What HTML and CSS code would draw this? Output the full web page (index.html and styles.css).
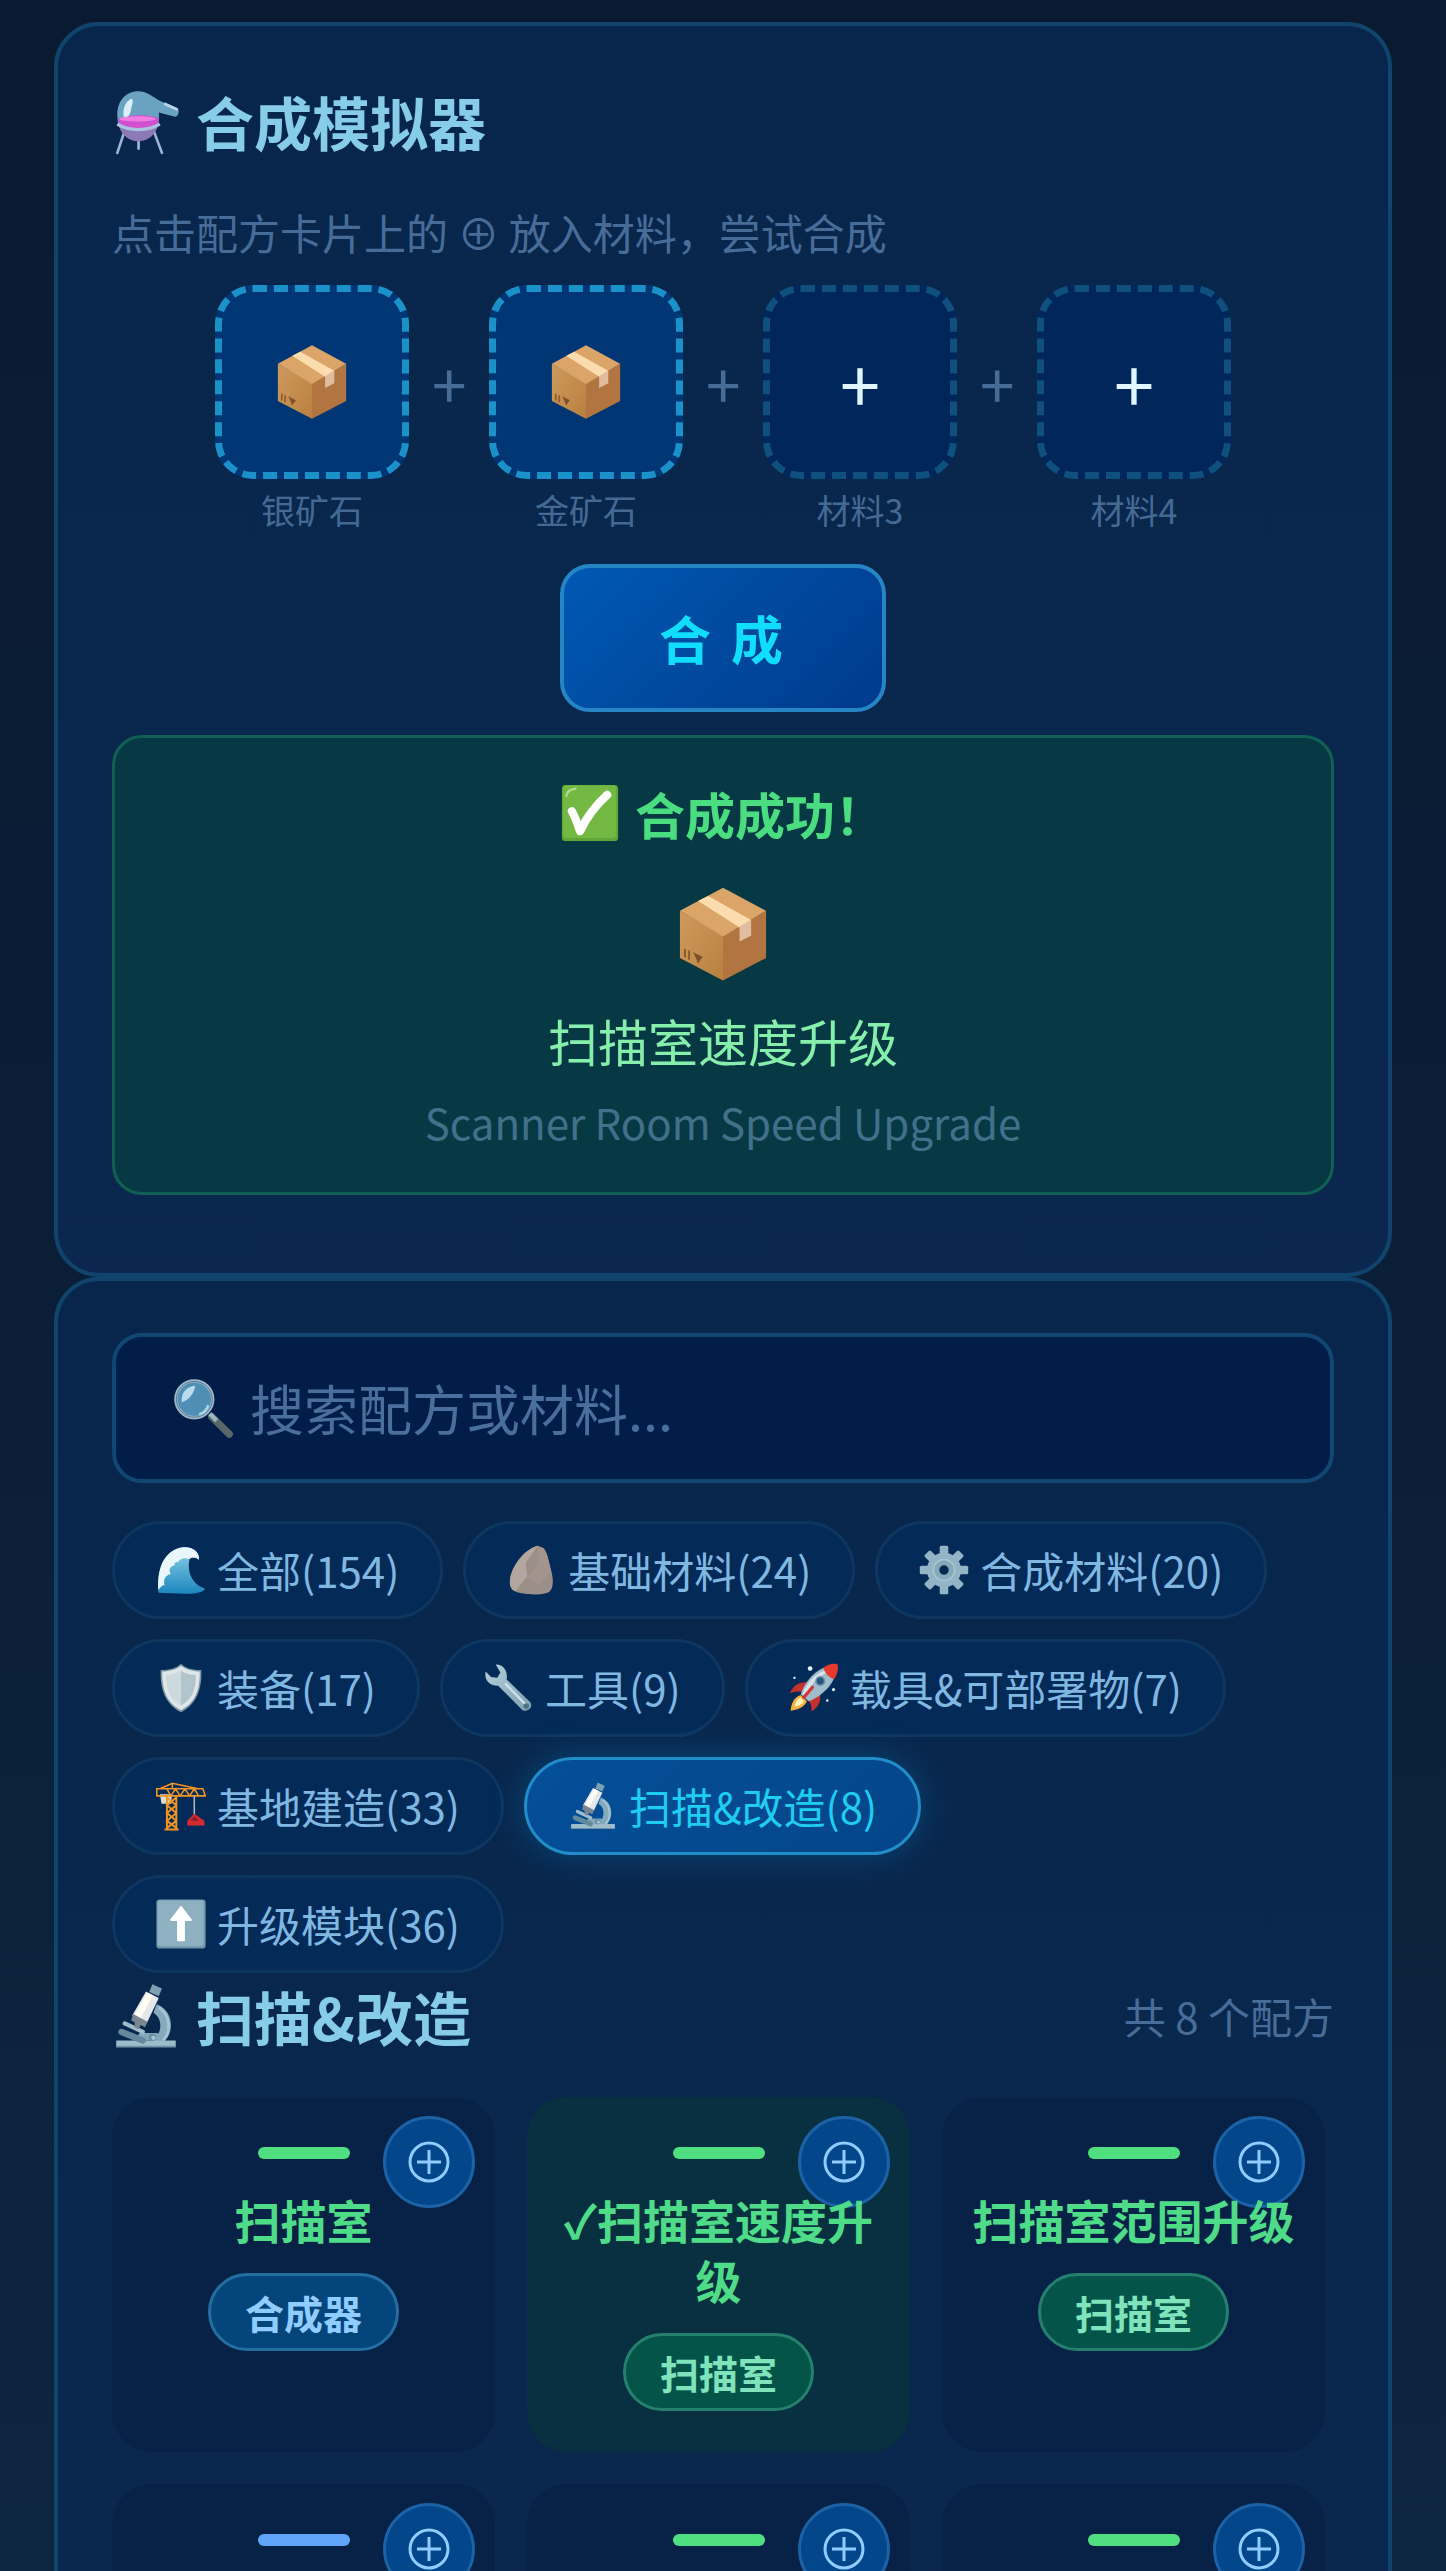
FILE: index.html
```html
<!DOCTYPE html>
<html lang="zh-CN">
<head>
<meta charset="utf-8">
<meta name="viewport" content="width=device-width, initial-scale=1">
<title>合成模拟器</title>
<link rel="stylesheet" href="styles.css">
</head>
<body>
<svg class="sprite" aria-hidden="true">
  <defs>
    <linearGradient id="wood" x1="0" y1="0" x2="1" y2="1"><stop offset="0" stop-color="#cf9a5f"/><stop offset="1" stop-color="#b9803f"/></linearGradient>
    <linearGradient id="steel" x1="0" y1="0" x2="1" y2="1"><stop offset="0" stop-color="#b6d0dc"/><stop offset="1" stop-color="#7b9fb2"/></linearGradient>
    <linearGradient id="sea" x1="0" y1="0" x2="0" y2="1"><stop offset="0" stop-color="#8fd3e8"/><stop offset="1" stop-color="#1c86bd"/></linearGradient>
  </defs>
  <symbol id="i-box" viewBox="0 0 128 128">
    <path d="M12 36 64 66v54L12 93z" fill="url(#wood)"/>
    <path d="M116 36 64 66v54l52-27z" fill="#b27440"/>
    <path d="M12 36 64 8l52 28-52 31z" fill="#dba468"/>
    <path d="M46 18 34 24l50 32 14-9z" fill="#fbdcae"/>
    <path d="M84 55v18l14-7V47z" fill="#e0bda0"/>
    <path d="M18 82v10M23 84v11M30 88l8 4-4 5zM34 94v5" stroke="#7c5228" stroke-width="2" fill="#7c5228"/>
  </symbol>
  <symbol id="i-scope" viewBox="0 0 128 128">
    <path d="M84 42c32 12 34 52 14 70H72c22-10 26-42 6-54z" fill="#86aabd"/>
    <path d="M88 48c22 14 24 46 8 62" stroke="#a5c5d3" stroke-width="5" fill="none"/>
    <path d="M8 110h112v13H8z" fill="#9dbccb"/>
    <path d="M8 120h112v3H8z" fill="#6f93a6"/>
    <path d="M52 96h34l8 14H42z" fill="#84a8ba"/>
    <path d="M18 94l40 16" stroke="#63899d" stroke-width="12" stroke-linecap="round"/>
    <path d="M24 78l34 16" stroke="#9fbdcb" stroke-width="8" stroke-linecap="round"/>
    <path d="M76 4l18 8-6 15-18-8z" fill="#7d9fb2"/>
    <path d="M64 18l24 12-22 46-28-13z" fill="#e4e8ea"/>
    <path d="M67 20l10 5-24 45-12-6z" fill="#fffef4"/>
    <path d="M40 60l27 15-5 10-8-4-4 8-8-4 1-9-7-4z" fill="#7b8790"/>
    <circle cx="76" cy="104" r="7" fill="#6b8fa3"/><circle cx="78" cy="105" r="4" fill="#a7c4d0"/>
  </symbol>
  <symbol id="i-add" viewBox="0 0 44 44">
    <circle cx="22" cy="22" r="19" fill="none" stroke="currentColor" stroke-width="3"/>
    <path d="M22 10v24M10 22h24" stroke="currentColor" stroke-width="3"/>
  </symbol>
</svg>

<main class="page">
  <section class="panel simulator">
    <h1 class="title">
      <svg class="title-icon" viewBox="0 0 128 128" aria-hidden="true">
        <path d="M26 76 10 124M50 82v34M76 76l18 48" stroke="#9fb3d6" stroke-width="5" stroke-linecap="round"/>
        <path d="M50 8c16 0 26 10 40 18l34 16c4 3 0 14-5 14L88 48c4 30-12 52-38 52S10 80 10 52C10 26 26 8 50 8z" fill="#6aa3c1"/>
        <path d="M11 60c20-9 56-9 77-2 0 24-14 44-38 44S13 84 11 60z" fill="#8d79b8"/>
        <path d="M13 60c20-9 54-9 74-1 1 7-1 12-3 15-20 7-48 6-68-1-2-4-3-8-3-13z" fill="#d24fd0"/>
        <ellipse cx="48" cy="60" rx="34" ry="5" fill="#f07ee2"/>
        <path d="M10 70c22 14 58 13 80 0" stroke="#a9c4de" stroke-width="6" fill="none"/>
        <path d="M36 22c-12 6-16 20-14 34 8 2 12-2 14-14 2-10 6-18 0-20z" fill="#d9eef8"/>
        <path d="M100 32l22 10" stroke="#b9d8e8" stroke-width="5" stroke-linecap="round"/>
      </svg>
      <span>合成模拟器</span>
    </h1>
    <p class="hint">点击配方卡片上的 ⊕ 放入材料，尝试合成</p>

    <div class="slots">
      <div class="slot-col">
        <button class="slot filled" type="button" aria-labelledby="s1"><svg class="slot-icon" aria-hidden="true"><use href="#i-box"/></svg></button>
        <span class="slot-label" id="s1">银矿石</span>
      </div>
      <span class="joiner">+</span>
      <div class="slot-col">
        <button class="slot filled" type="button" aria-labelledby="s2"><svg class="slot-icon" aria-hidden="true"><use href="#i-box"/></svg></button>
        <span class="slot-label" id="s2">金矿石</span>
      </div>
      <span class="joiner">+</span>
      <div class="slot-col">
        <button class="slot" type="button" aria-describedby="s3">+</button>
        <span class="slot-label" id="s3">材料3</span>
      </div>
      <span class="joiner">+</span>
      <div class="slot-col">
        <button class="slot" type="button" aria-describedby="s4">+</button>
        <span class="slot-label" id="s4">材料4</span>
      </div>
    </div>

    <button class="craft" type="button">合 成</button>

    <div class="result">
      <p class="result-title">
        <svg class="check-icon" viewBox="0 0 128 128" aria-hidden="true">
          <rect x="2" y="2" width="124" height="124" rx="8" fill="#5fa638"/>
          <rect x="4" y="3" width="118" height="116" rx="8" fill="#72b843"/>
          <path d="M12 26q2-14 20-16" stroke="#b5dc8f" stroke-width="5" fill="none" stroke-linecap="round"/>
          <path d="M24 60q8 14 18 44 22-46 60-80" stroke="#fff" stroke-width="18" fill="none" stroke-linecap="round" stroke-linejoin="round"/>
        </svg>
        <span>合成成功！</span>
      </p>
      <svg class="result-icon" aria-hidden="true"><use href="#i-box"/></svg>
      <p class="result-name">扫描室速度升级</p>
      <p class="result-en">Scanner Room Speed Upgrade</p>
    </div>
  </section>

  <section class="panel recipes">
    <label class="search">
      <svg class="search-icon" viewBox="0 0 128 128" aria-hidden="true">
        <path d="M80 82l36 36" stroke="#59666a" stroke-width="15" stroke-linecap="round"/>
        <path d="M76 76l14 14" stroke="#9eb6c0" stroke-width="9"/>
        <circle cx="44" cy="46" r="38" fill="#4f8fb6" stroke="#9fb9c9" stroke-width="7"/>
        <circle cx="44" cy="46" r="37" fill="none" stroke="#55788f" stroke-width="2"/>
        <path d="M18 52c-2-20 10-32 28-34-2 14-12 30-28 34z" fill="#b7dcee"/>
        <path d="M56 76q12-4 16-16" stroke="#a5dcec" stroke-width="5" fill="none" stroke-linecap="round"/>
      </svg>
      <input class="search-input" type="text" placeholder="搜索配方或材料..." aria-label="搜索配方或材料">
    </label>

    <nav class="chips">
      <button class="chip" type="button">
        <svg class="chip-icon" viewBox="0 0 128 128" aria-hidden="true">
          <path d="M6 122C2 64 20 12 70 6c26-2 42 14 40 32-8-8-18-8-24-2-8 34 8 66 40 76-8 12-30 14-68 12z" fill="url(#sea)"/>
          <path d="M6 116C2 58 22 12 70 6c26-2 42 14 40 32-8-8-20-8-26-2-12-4-22-2-28 8-6-2-10 2-8 8-14 2-16 14-10 22-14 2-20 16-16 28-8 2-12 8-16 14z" fill="#e9f7fb"/>
        </svg><span>全部(154)</span></button>
      <button class="chip" type="button">
        <svg class="chip-icon" viewBox="0 0 128 128" aria-hidden="true">
          <path d="M8 88C12 54 44 12 78 2l16 6c10 14 14 38 20 62 6 22 4 42-6 50-22 10-68 8-90-2C8 112 6 100 8 88z" fill="#9b8f89"/>
          <path d="M78 2 48 46l4 34-30 38C8 112 6 100 8 88 12 54 44 12 78 2z" fill="#b3a69f"/>
          <path d="M78 2l2 48-28 30 30 22 32-32c-6-24-10-48-20-62z" fill="#a3958d"/>
        </svg><span>基础材料(24)</span></button>
      <button class="chip" type="button">
        <svg class="chip-icon" viewBox="0 0 128 128" aria-hidden="true">
          <g fill="#92b4c4"><rect x="53" y="2" width="22" height="124" rx="4"/><rect x="53" y="2" width="22" height="124" rx="4" transform="rotate(45 64 64)"/><rect x="53" y="2" width="22" height="124" rx="4" transform="rotate(90 64 64)"/><rect x="53" y="2" width="22" height="124" rx="4" transform="rotate(135 64 64)"/></g>
          <circle cx="64" cy="64" r="44" fill="#92b4c4"/>
          <circle cx="64" cy="64" r="27" fill="#86a9ba" stroke="#a9c6d3" stroke-width="4"/>
          <circle cx="64" cy="64" r="12" fill="#05284f"/>
        </svg><span>合成材料(20)</span></button>
      <button class="chip" type="button">
        <svg class="chip-icon" viewBox="0 0 128 128" aria-hidden="true">
          <path d="M64 2c12 12 30 16 52 16 2 50-12 88-52 108C24 106 10 68 12 18 34 18 52 14 64 2z" fill="#7c98a6"/>
          <path d="M64 7c12 10 29 14 48 15 1 46-11 80-48 99C27 102 15 68 16 22 36 21 52 17 64 7z" fill="#dfe6e8"/>
          <path d="M64 19c10 8 22 11 38 12 0 38-9 62-38 78z" fill="#b1c5cd"/>
          <path d="M64 19c-10 8-22 11-38 12 0 38 9 62 38 78z" fill="#ccd9dd"/>
        </svg><span>装备(17)</span></button>
      <button class="chip" type="button">
        <svg class="chip-icon" viewBox="0 0 128 128" aria-hidden="true">
          <path d="M30 4 42 24 34 38 18 36 4 22C0 44 14 58 36 58l62 62c12 8 30-6 20-20L58 42C62 20 48 2 30 4z" fill="url(#steel)"/>
          <path d="M54 52l52 54" stroke="#cfe0e8" stroke-width="6"/>
          <circle cx="108" cy="110" r="7" fill="#4b6f83"/>
        </svg><span>工具(9)</span></button>
      <button class="chip" type="button">
        <svg class="chip-icon" viewBox="0 0 128 128" aria-hidden="true">
          <path d="M52 50C30 46 12 54 2 78c14-6 26-6 38-2zM78 76c6 20-2 36-20 48 0-14-2-22-10-30z" fill="#c3322f"/>
          <path d="M30 82C12 88 6 104 4 122c18-2 34-8 42-24z" fill="#fbb13c"/>
          <path d="M30 88c-10 4-14 14-16 24 12-2 20-6 24-14z" fill="#fff4c0"/>
          <path d="M98 10C70 14 40 48 30 80l20 18c32-12 64-42 68-70z" fill="#9fbccb"/>
          <path d="M90 20C66 28 44 54 34 80l8 6c10-28 30-50 56-62z" fill="#d5e4eb"/>
          <path d="M88 12C98 4 114 0 124 3c4 12-2 28-8 38-14-4-24-14-28-29z" fill="#e8382f"/>
          <circle cx="80" cy="46" r="11" fill="#24577c" stroke="#6f93a5" stroke-width="4"/>
          <path d="M60 62 38 88" stroke="#d63430" stroke-width="8" stroke-linecap="round"/>
          <g fill="#eaf7ff"><circle cx="54" cy="14" r="6"/><circle cx="14" cy="38" r="3"/><circle cx="114" cy="68" r="4"/><circle cx="98" cy="96" r="3"/></g>
        </svg><span>载具&amp;可部署物(7)</span></button>
      <button class="chip" type="button">
        <svg class="chip-icon" viewBox="0 0 128 128" aria-hidden="true">
          <path d="M10 34h30v24H14z" fill="#d9dcd6"/>
          <path d="M2 20h118l6 18H2zM10 20 42 6l66 14M42 6v14M28 20l10 18 12-18 12 18 12-18 12 18 12-18 10 16" fill="none" stroke="#f29422" stroke-width="4"/>
          <path d="M28 38v84M52 38v84M28 42l24 20-24 20 24 20-24 18M52 42 28 62l24 20-24 20 24 18M22 124h36" fill="none" stroke="#f29422" stroke-width="5"/>
          <path d="M98 38v50" stroke="#aeb7bd" stroke-width="4"/>
          <path d="M98 84 80 102v12h44v-12z" fill="#d52b30"/><path d="M98 90 88 102h22z" fill="#8d1d2b"/>
        </svg><span>基地建造(33)</span></button>
      <button class="chip active" type="button" aria-pressed="true">
        <svg class="chip-icon" aria-hidden="true"><use href="#i-scope"/></svg><span>扫描&amp;改造(8)</span></button>
      <button class="chip" type="button">
        <svg class="chip-icon" viewBox="0 0 128 128" aria-hidden="true">
          <rect x="1" y="1" width="126" height="126" rx="8" fill="#6f95a8"/>
          <rect x="4" y="3" width="118" height="118" rx="7" fill="#8fb0c0"/>
          <path d="M64 20 90 54H72v52H56V54H38z" fill="#fff" stroke="#fff" stroke-width="4" stroke-linejoin="round"/>
        </svg><span>升级模块(36)</span></button>
    </nav>

    <header class="list-head">
      <h2 class="title"><svg class="title-icon" aria-hidden="true"><use href="#i-scope"/></svg><span>扫描&amp;改造</span></h2>
      <span class="count">共 8 个配方</span>
    </header>

    <div class="grid">
      <article class="card">
        <button class="add" type="button" aria-label="放入"><svg class="add-icon" aria-hidden="true"><use href="#i-add"/></svg></button>
        <span class="bar"></span>
        <h3 class="name">扫描室</h3>
        <span class="badge">合成器</span>
      </article>
      <article class="card done">
        <button class="add" type="button" aria-label="放入"><svg class="add-icon" aria-hidden="true"><use href="#i-add"/></svg></button>
        <span class="bar"></span>
        <h3 class="name">✓扫描室速度升级</h3>
        <span class="badge green">扫描室</span>
      </article>
      <article class="card">
        <button class="add" type="button" aria-label="放入"><svg class="add-icon" aria-hidden="true"><use href="#i-add"/></svg></button>
        <span class="bar"></span>
        <h3 class="name">扫描室范围升级</h3>
        <span class="badge green">扫描室</span>
      </article>
      <article class="card">
        <button class="add" type="button" aria-label="放入"><svg class="add-icon" aria-hidden="true"><use href="#i-add"/></svg></button>
        <span class="bar blue"></span>
      </article>
      <article class="card">
        <button class="add" type="button" aria-label="放入"><svg class="add-icon" aria-hidden="true"><use href="#i-add"/></svg></button>
        <span class="bar"></span>
      </article>
      <article class="card">
        <button class="add" type="button" aria-label="放入"><svg class="add-icon" aria-hidden="true"><use href="#i-add"/></svg></button>
        <span class="bar"></span>
      </article>
    </div>
  </section>
</main>
</body>
</html>
```
FILE: styles.css
```css
* { box-sizing: border-box; }

body {
  margin: 0;
  background: #0b1c33;
  color: #e0f7ff;
  font-family: "Noto Sans CJK SC", "Noto Sans", sans-serif;
  font-size: 42px;
  line-height: 68px;
}

h1, h2, h3, p { margin: 0; }

button, input { font: inherit; color: inherit; }

button { padding: 0; cursor: pointer; }

svg { display: block; flex: none; }

.sprite { position: absolute; width: 0; height: 0; }

.page {
  height: 100vh;
  overflow: hidden;
  padding: 22px 54px 0;
  display: flex;
  flex-direction: column;
  background: linear-gradient(180deg, #0a1a30 0%, #0b1e38 50%, #0e2541 100%);
}

.panel {
  flex: none;
  padding: 52px 54px;
  border: 4px solid #11446d;
  border-radius: 45px;
  background: linear-gradient(180deg, #08264c, #0b274f);
}

.simulator {
  padding-bottom: 78px;
  display: flex;
  flex-direction: column;
}

.title {
  display: flex;
  align-items: center;
  gap: 16px;
  font-size: 58px;
  line-height: 86px;
  font-weight: 700;
  color: #87cce8;
}

.title-icon { width: 68px; height: 68px; }

.hint { margin-top: 34px; color: #486c98; }

.slots {
  margin-top: 19px;
  display: flex;
  justify-content: center;
  gap: 23px;
}

.slot-col {
  display: flex;
  flex-direction: column;
  align-items: center;
  gap: 4px;
}

.slot {
  width: 194px;
  height: 194px;
  display: grid;
  place-items: center;
  border: 7px dashed #10507f;
  border-radius: 38px;
  background: #00265a;
  color: #e0f7ff;
  font-size: 72px;
}

.slot.filled { border-color: #1a92c9; background: #003674; }

.slot-icon { width: 84px; height: 84px; }

.slot-label { font-size: 34px; line-height: 54px; color: #446a94; }

.joiner {
  width: 34px;
  height: 194px;
  line-height: 194px;
  font-size: 62px;
  color: #486c98;
  text-align: center;
}

.craft {
  align-self: center;
  margin-top: 27px;
  width: 326px;
  height: 148px;
  border: 4px solid #2585c5;
  border-radius: 30px;
  background: linear-gradient(135deg, #0059b3, #003a8c);
  color: #10defc;
  font-size: 52px;
  font-weight: 700;
  letter-spacing: 4px;
}

.result {
  margin-top: 23px;
  padding: 35px 40px 36px;
  display: flex;
  flex-direction: column;
  align-items: center;
  border: 3px solid #106053;
  border-radius: 30px;
  background: #063944;
  text-align: center;
}

.result-title {
  display: flex;
  align-items: center;
  gap: 16px;
  font-size: 50px;
  line-height: 80px;
  font-weight: 700;
  color: #4ade80;
}

.check-icon { width: 58px; height: 58px; }

.result-icon { width: 106px; height: 106px; margin: 28px 0 13px; }

.result-name { font-size: 50px; line-height: 80px; color: #86efac; }

.result-en { margin-top: 8px; color: #42708a; }

.search {
  height: 150px;
  padding: 0 57px;
  display: flex;
  align-items: center;
  gap: 15px;
  border: 4px solid #114873;
  border-radius: 30px;
  background: #021e48;
}

.search-icon { width: 62px; height: 62px; }

.search-input {
  flex: 1;
  min-width: 0;
  padding: 0;
  border: 0;
  outline: 0;
  background: none;
  font-size: 54px;
}

.search-input::placeholder { color: #4a6f9c; opacity: 1; }

.chips {
  margin-top: 38px;
  padding-right: 8px;
  display: flex;
  flex-wrap: wrap;
  gap: 20px;
}

.chip {
  height: 98px;
  padding: 0 41px;
  display: flex;
  align-items: center;
  gap: 11px;
  border: 3px solid #0e3760;
  border-radius: 49px;
  background: #042a58;
  color: #80b8e2;
}

.chip-icon { width: 50px; height: 50px; }

.chip.active {
  border-color: #218ec9;
  background: linear-gradient(135deg, #054f99, #044588);
  box-shadow: 0 0 36px rgba(0, 150, 220, 0.3);
  color: #1fcdf0;
}

.list-head {
  display: flex;
  justify-content: space-between;
  align-items: center;
}

.count { color: #486c98; }

.grid {
  margin-top: 38px;
  padding-right: 9px;
  display: grid;
  grid-template-columns: repeat(3, 1fr);
  gap: 32px;
}

.card {
  position: relative;
  min-height: 355px;
  padding: 50px 24px 40px;
  display: flex;
  flex-direction: column;
  align-items: center;
  border-radius: 40px;
  background: #072147;
}

.card.done { background: #083040; }

.bar { width: 92px; height: 12px; border-radius: 6px; background: #4fdf80; }

.bar.blue { background: #60a5fa; }

.name {
  position: relative;
  margin-top: 30px;
  font-size: 46px;
  line-height: 60px;
  font-weight: 700;
  color: #4fdc88;
  text-align: center;
}

.badge {
  margin-top: 24px;
  height: 78px;
  padding: 0 34px;
  border: 3px solid #236f9f;
  border-radius: 39px;
  background: #04457c;
  font-size: 39px;
  line-height: 72px;
  font-weight: 700;
  color: #90ccff;
}

.badge.green { border-color: #25806e; background: #05544a; color: #7fe3bc; }

.add {
  position: absolute;
  top: 19px;
  right: 20px;
  width: 92px;
  height: 92px;
  display: grid;
  place-items: center;
  border: 3px solid #1c62a4;
  border-radius: 50%;
  background: #04468a;
  color: #90ccff;
}

.add-icon { width: 44px; height: 44px; }
```
